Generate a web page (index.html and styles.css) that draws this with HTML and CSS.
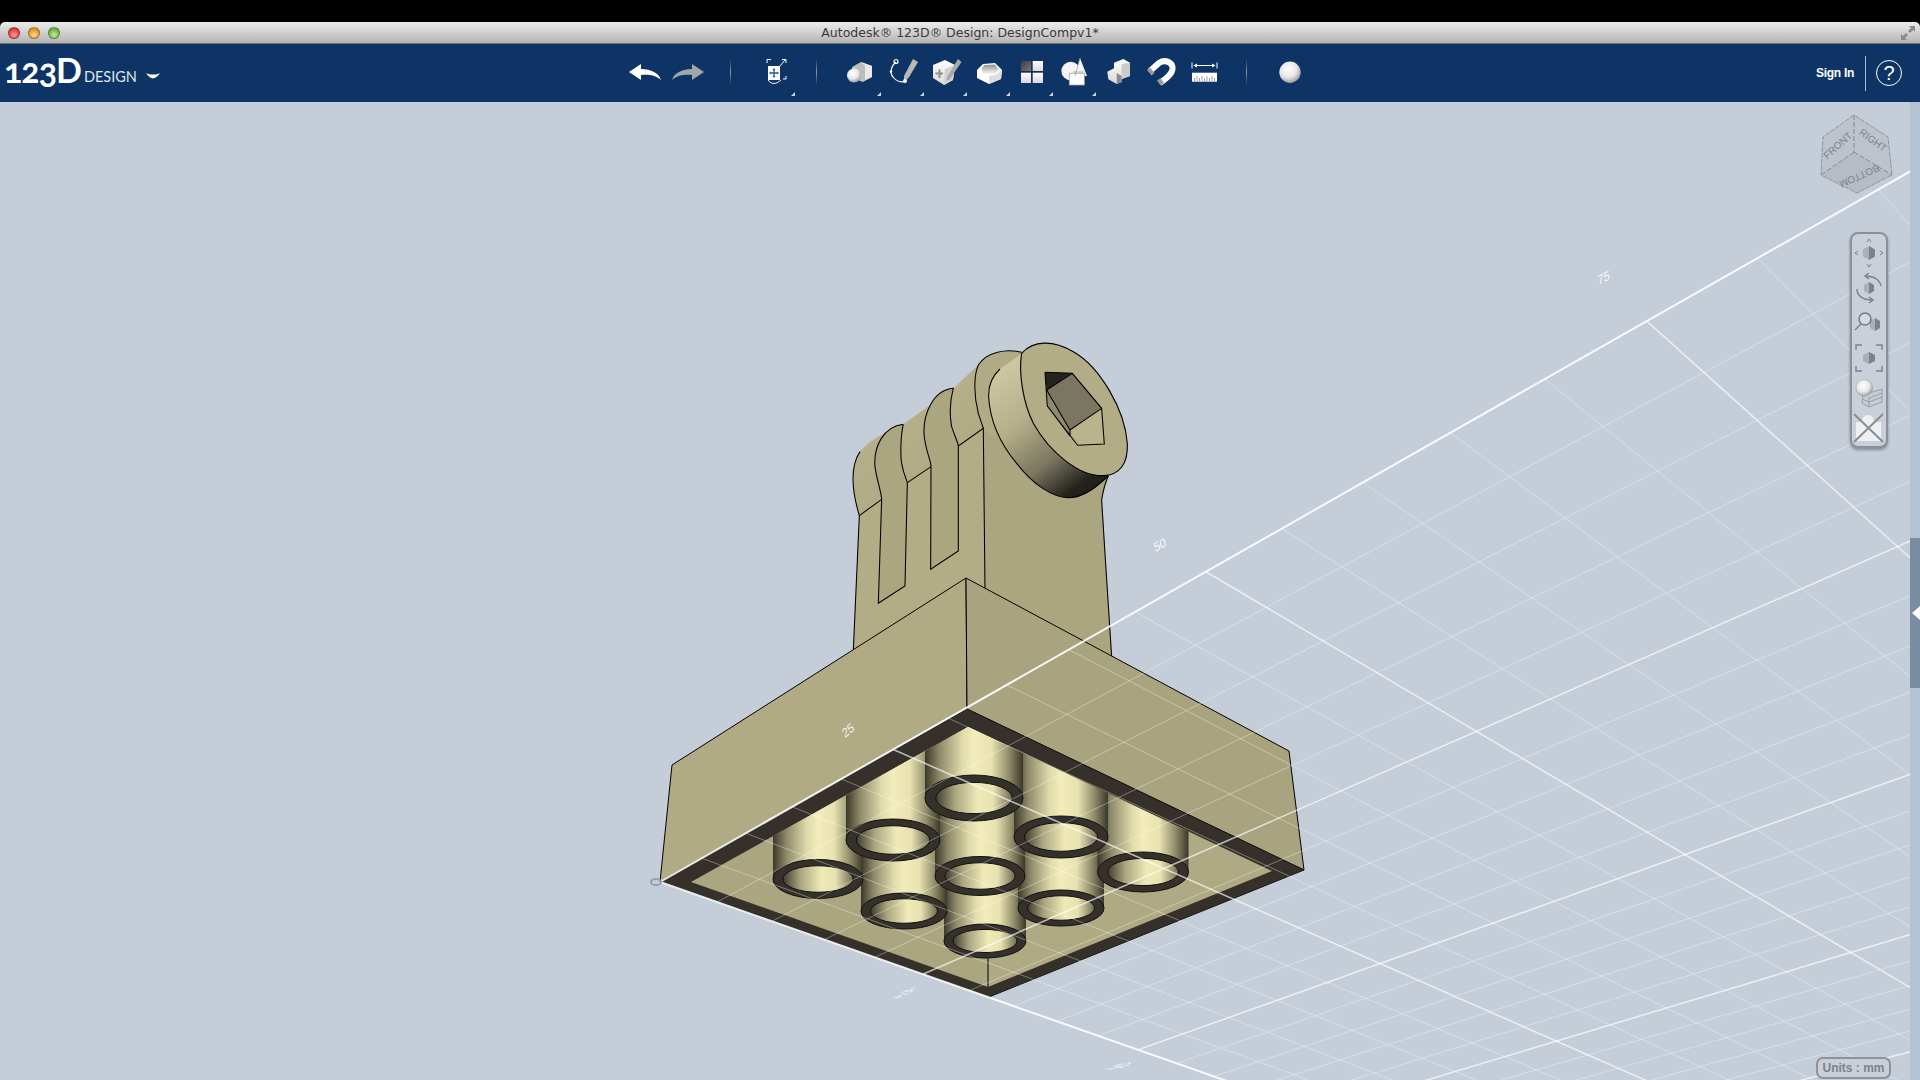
FILE: index.html
```html
<!DOCTYPE html>
<html lang="en">
<head>
  <meta charset="UTF-8">
  <title>Autodesk 123D Design</title>
  <link rel="stylesheet" href="styles.css">
</head>
<body>
  <!-- shared gradients for the toolbar icons and the model -->
  <svg class="defs" width="0" height="0">
    <defs>
      <linearGradient id="gWhite" x1="0" y1="0" x2="0" y2="1">
        <stop offset="0" stop-color="#ffffff"/><stop offset="1" stop-color="#d8d8d8"/>
      </linearGradient>
      <linearGradient id="gBowl" x1="0" y1="0" x2="0" y2="1">
        <stop offset="0" stop-color="#8f8f8f"/><stop offset="1" stop-color="#ffffff"/>
      </linearGradient>
      <linearGradient id="gDark" x1="0" y1="0" x2="1" y2="1">
        <stop offset="0" stop-color="#3e3e3e"/><stop offset="1" stop-color="#777777"/>
      </linearGradient>
      <radialGradient id="gBall" cx="0.42" cy="0.35" r="0.7">
        <stop offset="0" stop-color="#ffffff"/><stop offset="0.55" stop-color="#e8e8e8"/><stop offset="1" stop-color="#8f8f8f"/>
      </radialGradient>
      <linearGradient id="tube" x1="0" y1="0" x2="1" y2="0">
        <stop offset="0" stop-color="#3a3829"/><stop offset="0.15" stop-color="#8f8b6a"/>
        <stop offset="0.38" stop-color="#e0dbab"/><stop offset="0.5" stop-color="#f3edbb"/>
        <stop offset="0.68" stop-color="#e8e2b0"/><stop offset="0.86" stop-color="#8d8a68"/>
        <stop offset="1" stop-color="#3a3829"/>
      </linearGradient>
      <linearGradient id="tubeIn" x1="0" y1="0" x2="1" y2="0">
        <stop offset="0" stop-color="#3e3c2e"/><stop offset="0.25" stop-color="#aaa67f"/>
        <stop offset="0.55" stop-color="#f0eab8"/><stop offset="0.75" stop-color="#e8e2b0"/>
        <stop offset="1" stop-color="#6d6a52"/>
      </linearGradient>
      <linearGradient id="lug" x1="0" y1="0" x2="0.5" y2="1">
        <stop offset="0" stop-color="#c8c4a0"/><stop offset="0.35" stop-color="#b4af89"/><stop offset="1" stop-color="#b0ab85"/>
      </linearGradient>
      <linearGradient id="barrel" gradientUnits="userSpaceOnUse" x1="520" y1="170" x2="790" y2="530">
        <stop offset="0" stop-color="#cbc7a3"/><stop offset="0.35" stop-color="#b5b08a"/>
        <stop offset="0.68" stop-color="#7a7660"/><stop offset="0.92" stop-color="#24231c"/>
        <stop offset="1" stop-color="#1f1e18"/>
      </linearGradient>
      <clipPath id="pocket"><polygon points="691,882 968,727 1272,871 988,987"/></clipPath>
    </defs>
  </svg>

  <div class="app">
    <div class="top-edge"></div>

    <div class="titlebar">
      <div class="lights">
        <span class="light red"></span>
        <span class="light amber"></span>
        <span class="light green"></span>
      </div>
      <div class="title">Autodesk® 123D® Design: DesignCompv1*</div>
      <svg class="fullscreen" width="16" height="16" viewBox="0 0 16 16">
        <path d="M1 15 L1 9 L3 11 L6 8 L8 10 L5 13 L7 15 Z M15 1 L15 7 L13 5 L10 8 L8 6 L11 3 L9 1 Z"/>
      </svg>
    </div>

    <div class="toolbar">
      <div class="logo">
        <span class="logo-mark">123D</span>
        <span class="logo-name">DESIGN</span>
        <svg class="logo-menu" width="14" height="6" viewBox="0 0 14 6"><path d="M0 0 C4 2 10 2 14 0 C12 3 9 5.500 7 5.500 C5 5.500 2 3 0 0 Z"/></svg>
      </div>

      <div class="tools">
        <div class="tool">
          <svg viewBox="0 0 40 40"><path fill="#fff" d="M4 20 L16 12 L16 17 C26 17 34 21 36 28 C30 23 24 22.5 16 23 L16 28 Z"/></svg>
        </div>
        <div class="tool">
          <svg viewBox="0 0 40 40"><path fill="#a3a6a9" d="M36 20 L24 12 L24 17 C14 17 6 21 4 28 C10 23 16 22.5 24 23 L24 28 Z"/></svg>
        </div>
        <div class="tool"><span class="sep"></span></div>
        <div class="tool has-menu">
          <svg viewBox="0 0 40 40">
            <path class="ln" d="M13 11 V7.500 H17 M28 7.500 H32 V11 M32 24 V27 H29 M14 28 C15 30 18 31.500 20 31.500 C22 31.500 25 30 27 28 M26 14 L31 8"/>
            <rect x="14" y="14" width="12" height="14" fill="#fff"/>
            <path d="M20 16 L21.500 18 H20.700 V20.300 H23 V19.500 L25 21 L23 22.500 V21.700 H20.700 V24 H21.500 L20 26 L18.500 24 H19.300 V21.700 H17 V22.500 L15 21 L17 19.500 V20.300 H19.300 V18 H18.500 Z" fill="#2a5a94"/>
          </svg>
        </div>
        <div class="tool"><span class="sep"></span></div>
        <div class="tool has-menu">
          <svg viewBox="0 0 40 40">
            <polygon points="12,15 21,10 32,14 32,25 23,30 12,26" fill="#bdbdbd"/>
            <polygon points="21,10 32,14 32,25 25,28 25,14" fill="#e9e9e9"/>
            <circle cx="14" cy="23.500" r="7" fill="url(#gBall)"/>
          </svg>
        </div>
        <div class="tool has-menu">
          <svg viewBox="0 0 40 40">
            <path d="M13 10 C8 14 6.500 21 10 25 C13 29 18 30.500 22 29.500" fill="none" stroke="#fff" stroke-width="1.200"/>
            <circle cx="13" cy="9.500" r="2" fill="none" stroke="#fff" stroke-width="1.200"/>
            <circle cx="8" cy="19.500" r="1.200" fill="#fff"/>
            <polygon points="30,7 35,10 25.500,26 21,29.500 21,24" fill="#b9b9b9"/>
            <circle cx="22" cy="29" r="2" fill="#fff"/>
          </svg>
        </div>
        <div class="tool has-menu">
          <svg viewBox="0 0 40 40">
            <polygon points="7,13 19,8 29,13 27,28 18,33 7,26" fill="url(#gWhite)"/>
            <polygon points="19,17 29,13 27,28 18,33" fill="#d2d2d2"/>
            <path d="M13.500 17.500 V26 M9.500 21.500 H17" stroke="#8f8f8f" stroke-width="2" fill="none"/>
            <polygon points="32,7 35.500,10 24,27 20.500,29 21,25" fill="#a9a9a9"/>
          </svg>
        </div>
        <div class="tool has-menu">
          <svg viewBox="0 0 40 40">
            <polygon points="8,18 14,12 26,11 33,18 32,27 20,32 8,26" fill="#ffffff"/>
            <polygon points="20,32 32,27 33,18 27,22.500 20,24" fill="#dedede"/>
            <polygon points="12.500,17 15,13 26,12.500 29.500,17 26,22.500 14,22.500" fill="url(#gBowl)"/>
          </svg>
        </div>
        <div class="tool has-menu">
          <svg viewBox="0 0 40 40">
            <rect x="9" y="9" width="10" height="10" fill="url(#gDark)"/>
            <rect x="20.700" y="9" width="10.300" height="10" fill="url(#gWhite)"/>
            <rect x="9" y="20.700" width="10" height="10.300" fill="url(#gWhite)"/>
            <rect x="20.700" y="20.700" width="10.300" height="10.300" fill="url(#gWhite)"/>
          </svg>
        </div>
        <div class="tool has-menu">
          <svg viewBox="0 0 40 40">
            <circle cx="15.700" cy="19" r="9.300" fill="#f4f4f4"/>
            <polygon points="25,6 32,24 20,24" fill="#f4f4f4"/>
            <rect x="14.300" y="21.300" width="15" height="11.700" fill="#fff" stroke="#a8a8a8" stroke-width="0.800"/>
            <path d="M25 6 L20 24 M18 20 H29" stroke="#9a9a9a" stroke-width="0.700" fill="none"/>
          </svg>
        </div>
        <div class="tool">
          <svg viewBox="0 0 40 40">
            <polygon points="9.300,19.700 16,16.300 16,10.700 25.300,7 32,10.700 32,24 23.700,27 23.700,30 18.700,32 10.300,27.300" fill="url(#gWhite)"/>
            <polygon points="18.700,21 23.700,24 23.700,30 18.700,32" fill="#8a8a8a"/>
            <polygon points="23.700,12 32,10.700 32,24 23.700,27" fill="#cbcbcb"/>
          </svg>
        </div>
        <div class="tool">
          <svg viewBox="0 0 40 40">
            <path d="M9 19 L18 11 C24 7 32 10 31.500 17 C31 22 26 26 19 31" fill="none" stroke="#fff" stroke-width="6"/>
            <path d="M6 18 L10.500 23.500 L13.500 21 L9 15.500 Z M16 28.500 L19.500 33.500 L23 31 L19.500 26 Z" fill="#9a9a9a"/>
          </svg>
        </div>
        <div class="tool">
          <svg viewBox="0 0 40 40">
            <path d="M8 10.500 V16.500 M33 10.500 V16.500 M11 13.500 H30" stroke="#fff" stroke-width="1" fill="none"/>
            <path d="M9.500 13.500 L13 11.500 V15.500 Z M31.500 13.500 L28 11.500 V15.500 Z" fill="#fff"/>
            <rect x="8" y="20.700" width="25" height="9" fill="#fff"/>
            <path d="M10.500 29 V26 M13 29 V24 M15.500 29 V26 M18 29 V24 M20.500 29 V26 M23 29 V24 M25.500 29 V26 M28 29 V24 M30.500 29 V26" stroke="#777" stroke-width="0.700" fill="none"/>
          </svg>
        </div>
        <div class="tool"><span class="sep"></span></div>
        <div class="tool">
          <svg viewBox="0 0 40 40"><circle cx="20" cy="20.300" r="10.700" fill="url(#gBall)"/></svg>
        </div>
      </div>

      <div class="account">
        <span class="sign-in">Sign In</span>
        <span class="account-sep"></span>
        <span class="help">?</span>
      </div>
    </div>

    <div class="workspace">
      <div class="canvas">
        <svg class="scene" width="1910" height="978" viewBox="0 102 1910 978">
          <!-- tower with the ribs and the bolt head, drawn in 3x crop units -->
          <g transform="translate(820 320) scale(0.3333)">
            <path class="face-r" d="M490,325 L495,805 L875,1010 L845,535 L865,468 L600,95 L475,135 Z"/>
            <path class="face-l" d="M118,587 L100,990 L438,775 L495,805 L490,325 Z"/>
            <path class="collar" d="M605,97 C560,85 500,95 475,135 C460,170 462,230 475,280 L490,325 L530,360 L505,200 L540,147 Z"/>
            <path fill="url(#lug)" d="M118,587 C95,510 90,440 120,395 C140,370 165,355 185,345 L250,313 C190,320 160,380 165,440 C170,480 183,510 185,538 Z"/>
            <path class="face-r" d="M250,313 C190,320 160,380 165,440 C170,480 183,510 185,538 L175,850 L255,798 L262,488 C260,480 250,460 245,430 C240,400 243,340 250,313 Z"/>
            <path fill="url(#lug)" d="M250,313 C243,340 240,400 245,430 C250,460 260,480 262,488 L333,440 C333,420 315,390 312,340 C310,280 340,210 400,205 Z"/>
            <path class="face-r" d="M400,205 C340,210 310,280 312,340 C315,390 333,420 333,440 L332,748 L415,693 L415,378 C415,370 405,350 395,320 C388,280 390,240 400,205 Z"/>
            <path fill="url(#lug)" d="M400,205 C390,240 388,280 395,320 C405,350 415,370 415,378 L490,325 L475,280 C462,230 460,170 475,135 Z"/>
            <path fill="url(#barrel)" d="M605,100 L540,147 C515,170 505,200 506,230 C510,300 540,370 590,430 C640,495 700,533 745,533 C790,535 830,500 865,468 L760,268 Z"/>
            <path class="ln-k" d="M540,147 C515,170 505,200 506,230 C510,300 540,370 590,430 C640,495 700,533 745,533 C790,535 830,500 865,468"/>
            <path class="bolt" d="M605,100 C640,60 700,60 760,95 C840,140 915,270 922,370 C925,430 900,465 850,467 C780,470 690,400 640,310 C610,250 595,160 605,100 Z"/>
            <polygon points="675,157 757,160 680,210" fill="#24231c"/>
            <polygon points="680,210 757,160 845,265 750,330" fill="#7a7660"/>
            <polygon points="750,330 845,265 853,372 773,376" fill="#b9b48e"/>
            <polygon points="680,210 750,330 750,348 682,258" fill="#8f8b70"/>
            <path class="ln-k" d="M675,157 L757,160 L845,265 L853,372 L773,376 L682,258 L675,157 M680,210 L757,160 M680,210 L750,330 L845,265 M750,330 V348 M682,258 L750,348"/>
            <path class="ln-k" d="M118,587 C95,510 90,440 120,395 M250,313 C190,320 160,380 165,440 C170,480 183,510 185,538 L175,850 L255,798 L262,488 C260,480 250,460 245,430 C240,400 243,340 250,313"/>
            <path class="ln-k" d="M118,587 L100,990 M118,587 L185,538 M262,488 L333,440 L332,748 L415,693 L415,378 L490,325 L495,805 M333,440 C333,420 315,390 312,340 C310,280 340,210 400,205 C390,240 388,280 395,320 C405,350 415,370 415,378"/>
            <path class="ln-k" d="M605,97 C560,85 500,95 475,135 C460,170 462,230 475,280 L490,325 M865,468 C855,490 848,520 845,540 L855,700 L875,1010"/>
          </g>

          <!-- base block -->
          <polygon class="block-l" points="672,765 966,578 967,709 660,882"/>
          <polygon class="block-r" points="966,578 1289,751 1304,870 967,709"/>
          <polygon class="rim" points="660,882 967,709 1304,870 989,997"/>
          <polygon class="floor-l" points="691,882 968,727 988,736.500 988,987"/>
          <polygon class="floor-r" points="988,736.500 1272,871 988,987"/>
          <path class="ln-b" d="M988 955 V987"/>
          <g id="tubes"></g>

          <!-- grid lies in front of the model -->
          <g id="grid"></g>
          <ellipse class="origin" cx="656" cy="882" rx="5" ry="3"/>
          <text class="tick" transform="translate(850 734) rotate(-40) skewX(-12)" text-anchor="middle">25</text>
          <text class="tick" transform="translate(1161 549) rotate(-30) skewX(-15)" text-anchor="middle">50</text>
          <text class="tick" transform="translate(1604 282) rotate(-25) skewX(-20)" text-anchor="middle">75</text>
          <text class="tick" transform="translate(900 997) rotate(-20) scale(1.300 0.500) skewX(-40)" text-anchor="middle">-25</text>
          <text class="tick" transform="translate(1114 1069) rotate(-10) scale(1.300 0.450) skewX(-40)" text-anchor="middle">-50</text>
        </svg>

        <svg class="view-cube" width="80" height="90" viewBox="0 0 80 90">
          <polygon class="cube-face" points="39,5 8,27 6,65 39,42"/>
          <polygon class="cube-face" points="39,5 73,27 77,65 39,42"/>
          <polygon class="cube-face low" points="39,42 6,65 42,83 77,65"/>
          <path class="cube-edge" d="M39,5 L8,27 L6,65 L42,83 L77,65 L73,27 Z"/>
          <path class="cube-spoke" d="M39,5 V42 M39,42 L6,65 M39,42 L77,65"/>
          <text class="cube-text" transform="translate(25 38) rotate(-42)" text-anchor="middle">FRONT</text>
          <text class="cube-text" transform="translate(56 33) rotate(36)" text-anchor="middle">RIGHT</text>
          <text class="cube-text" transform="translate(43 63) rotate(156)" text-anchor="middle">BOTTOM</text>
        </svg>

        <div class="nav-bar">
          <svg viewBox="0 0 34 34">
            <polygon class="hex-l" points="17,10 11,13.500 11,20.500 17,24"/>
            <polygon class="hex-r" points="17,10 23,13.500 23,20.500 17,24"/>
            <path class="nav-ln thin" d="M15 6 L17 3 L19 6 M15 28 L17 31 L19 28 M6 15 L3 17 L6 19 M28 15 L31 17 L28 19"/>
          </svg>
          <svg viewBox="0 0 34 34">
            <polygon class="hex-l" points="17,11 12,14 12,20 17,23"/>
            <polygon class="hex-r" points="17,11 22,14 22,20 17,23"/>
            <path class="nav-ln" d="M29 15 C28 9 22 5 14 5 M17 2 L13 5 L17 8 M5 18 C5 25 11 29 20 29 M17 26 L21 29 L17 32"/>
          </svg>
          <svg viewBox="0 0 34 34">
            <polygon class="hex-l" points="23,12 18,15 18,22 23,25"/>
            <polygon class="hex-r" points="23,12 28,15 28,22 23,25"/>
            <circle class="lens" cx="13" cy="13" r="6"/>
            <path class="nav-ln" d="M9 18 L3 24"/>
          </svg>
          <svg viewBox="0 0 34 34">
            <polygon class="hex-l" points="17,11 11,14 11,20 17,23"/>
            <polygon class="hex-r" points="17,11 23,14 23,20 17,23"/>
            <path class="nav-ln" d="M4 9 V4 H10 M24 4 H30 V9 M30 25 V30 H24 M10 30 H4 V25"/>
          </svg>
          <svg viewBox="0 0 34 34">
            <polygon class="box-side" points="11,19 30,13 30,26 17,31 10,27"/>
            <path class="box-ln" d="M11 19 L30 13 V26 L17 31 L10 27 Z M17 22 V31 M17 22 L30 17 M10 23 L17 26 L30 21"/>
            <circle class="ball" cx="12.300" cy="12" r="8.300"/>
          </svg>
          <svg viewBox="0 0 34 34">
            <circle cx="16" cy="10" r="6" fill="#eef0f2"/>
            <polygon points="4,11 29,11 29,30 4,30" fill="#eef0f2"/>
            <path class="nav-x" d="M2 3 L31 31 M31 3 L2 31"/>
          </svg>
        </div>

        <div class="units">Units : mm</div>
      </div>

      <div class="side-strip">
        <div class="side-handle"></div>
      </div>
    </div>
  </div>

  <script src="scene.js"></script>
</body>
</html>
```

FILE: styles.css
```css
* {
  margin: 0;
  padding: 0;
  box-sizing: border-box;
}

body {
  width: 1920px;
  height: 1080px;
  overflow: hidden;
  background: #000;
  font-family: 'Liberation Sans', sans-serif;
}

.defs {
  position: absolute;
}

.app {
  display: flex;
  flex-direction: column;
  height: 1080px;
}

.top-edge {
  height: 22px;
  background: #000;
}

/* Mac title bar */
.titlebar {
  height: 22px;
  display: flex;
  align-items: center;
  padding: 0 4px 0 8px;
  border-radius: 5px 5px 0 0;
  border-bottom: 1px solid #6e6e6e;
  background: linear-gradient(#ececec, #b4b4b4);
}

.lights {
  display: flex;
  gap: 8px;
  width: 60px;
}

.light {
  width: 12px;
  height: 12px;
  border-radius: 50%;
  border: 1px solid rgba(0, 0, 0, 0.3);
}

.light.red { background: radial-gradient(circle at 50% 70%, #ff9a95, #d93a3a 70%); }
.light.amber { background: radial-gradient(circle at 50% 70%, #ffd98a, #d9932a 70%); }
.light.green { background: radial-gradient(circle at 50% 70%, #c5ee9a, #6cab42 70%); }

.title {
  flex: 1;
  text-align: center;
  font-family: 'DejaVu Sans', sans-serif;
  font-size: 12.500px;
  color: #3a3a3a;
}

.fullscreen {
  fill: #8a8a8a;
  margin-left: 48px;
}

/* Main toolbar */
.toolbar {
  height: 58px;
  display: flex;
  background: #0d3464;
  color: #fff;
}

.logo {
  width: 623px;
  display: flex;
  align-items: flex-start;
  padding: 3px 0 0 4px;
  flex-shrink: 0;
}

.logo-mark {
  font-family: Lato, sans-serif;
  font-weight: 700;
  font-size: 34px;
  font-variant-numeric: oldstyle-nums;
  letter-spacing: -1px;
  line-height: 46px;
}

.logo-name {
  font-family: Lato, sans-serif;
  font-size: 14.500px;
  line-height: 16px;
  margin: 22px 0 0 3px;
  color: #dfe6ee;
}

.logo-menu {
  fill: #fff;
  margin: 26px 0 0 9px;
}

.tools {
  display: flex;
}

.tool {
  position: relative;
  width: 43px;
  height: 58px;
  padding: 8px 1.500px 0;
  display: flex;
  justify-content: center;
}

.tool svg {
  width: 40px;
  height: 40px;
}

.tool.has-menu::after {
  content: "";
  position: absolute;
  right: 0;
  bottom: 6px;
  border-style: solid;
  border-width: 0 0 4px 4px;
  border-color: transparent transparent #cfd5dc transparent;
}

.sep {
  width: 1px;
  height: 26px;
  margin-top: 7px;
  background: linear-gradient(rgba(190, 190, 170, 0), rgba(190, 190, 170, 0.75) 50%, rgba(190, 190, 170, 0));
}

.ln {
  fill: none;
  stroke: #fff;
  stroke-width: 1;
}

.account {
  margin-left: auto;
  display: flex;
  align-items: center;
  padding-right: 18px;
}

.sign-in {
  font-size: 12px;
  font-weight: 700;
  letter-spacing: -0.300px;
}

.account-sep {
  width: 1px;
  height: 35px;
  margin: 0 10px 0 11px;
  background: #a9bdd6;
}

.help {
  width: 26px;
  height: 26px;
  border: 1px solid #fff;
  border-radius: 50%;
  text-align: center;
  font-size: 20px;
  line-height: 24px;
}

/* 3D view */
.workspace {
  flex: 1;
  display: flex;
  min-height: 0;
}

.canvas {
  position: relative;
  flex: 1;
  overflow: hidden;
  background: #c4cdd8;
}

.scene {
  display: block;
}

.side-strip {
  width: 10px;
  background: #b4c2d3;
  padding-top: 436px;
}

.side-handle {
  position: relative;
  height: 150px;
  background: #7a8ca2;
}

.side-handle::after {
  content: "";
  position: absolute;
  left: 2px;
  top: 68px;
  width: 8px;
  height: 14px;
  background: #fff;
  clip-path: polygon(100% 0, 0 50%, 100% 100%);
}

/* model */
.face-r { fill: #aaa680; }
.face-l { fill: #b2ad87; }
.collar { fill: #b0ab85; }
.bolt { fill: #b2ad87; stroke: #000; stroke-width: 3.400; }
.ln-k { fill: none; stroke: #000; stroke-width: 3.200; }
.ln-b { fill: none; stroke: #000; stroke-width: 1; }
.block-l { fill: #b0ab85; stroke: #000; stroke-width: 1; }
.block-r { fill: #a8a47f; stroke: #000; stroke-width: 1; }
.rim { fill: #35312a; stroke: #1a1812; stroke-width: 1; }
.floor-l { fill: #aaa680; }
.floor-r { fill: #aeaa83; }
.tube-body { fill: url(#tube); }
.tube-ring { fill: #35312a; stroke: #111; stroke-width: 1; }
.tube-hole { fill: url(#tubeIn); stroke: #111; stroke-width: 1; }

.grid-minor { stroke: #fff; stroke-opacity: 0.35; stroke-width: 1; }
.grid-major { stroke: #fff; stroke-opacity: 0.65; stroke-width: 1.600; }
.grid-axis { stroke: #fff; stroke-opacity: 0.9; stroke-width: 2; }
.origin { fill: none; stroke: #999ea5; stroke-width: 2; }
.tick { font-family: 'Liberation Sans', sans-serif; font-size: 12px; fill: #fff; fill-opacity: 0.9; }

/* view cube */
.view-cube {
  position: absolute;
  top: 8px;
  right: 15px;
}

.cube-face { fill: #b8bdc4; fill-opacity: 0.65; }
.cube-face.low { fill: #adb2b8; }
.cube-edge { fill: none; stroke: #92969d; stroke-width: 1; stroke-dasharray: 5 1; }
.cube-spoke { fill: none; stroke: #868a91; stroke-width: 1; stroke-dasharray: 5 2; }
.cube-text { font-family: 'Liberation Sans', sans-serif; font-size: 10px; fill: #7f838a; }

/* navigation bar */
.nav-bar {
  position: absolute;
  top: 130px;
  right: 22px;
  width: 38px;
  height: 216px;
  display: flex;
  flex-direction: column;
  gap: 1px;
  padding: 2px 0 1px;
  border: 2px solid #8c9198;
  border-radius: 8px;
  background: #c9d0d9;
  box-shadow: 0 2px 3px rgba(60, 60, 60, 0.45);
}

.nav-bar svg {
  width: 34px;
  height: 34px;
}

.hex-l { fill: #aab0b6; }
.hex-r { fill: #7e8288; }
.nav-ln { fill: none; stroke: #7f8389; stroke-width: 1.500; }
.nav-ln.thin { stroke-width: 1; }
.nav-x { fill: none; stroke: #8a8e94; stroke-width: 2; }
.lens { fill: #d5dae0; stroke: #777b81; stroke-width: 1.500; }
.box-side { fill: #c8cdd3; }
.box-ln { fill: none; stroke: #9a9ea4; stroke-width: 1; }
.ball { fill: url(#gBall); stroke: #9a9ea4; stroke-width: 0.500; }

.units {
  position: absolute;
  right: 19px;
  bottom: 1px;
  width: 75px;
  height: 22px;
  border: 2px solid #8e9299;
  border-radius: 7px;
  background: #c8cfd8;
  text-align: center;
  font-size: 12px;
  font-weight: 700;
  line-height: 18px;
  color: #7d8288;
}
```

FILE: scene.js
```js
// builds the perspective grid and the nine tubes in the pocket
var NS = 'http://www.w3.org/2000/svg';

function add(parent, name, attrs) {
  var el = document.createElementNS(NS, name);
  for (var k in attrs) el.setAttribute(k, attrs[k]);
  parent.appendChild(el);
  return el;
}

var O = [660, 882];
var vpA = [-943, 1793];
var vpB = [3300, 1808];

// position on the two axes, one unit = 25mm
function axisA(t) {
  var x = (660 + 119.8 * t) / (1 - 0.127 * t);
  return [x, 882 - 0.5684 * (x - 660)];
}
function axisB(s) {
  var x = (660 + 365 * s) / (1 + 0.1106 * s);
  return [x, 882 + 0.351 * (x - 660)];
}

function ray(from, vp, dist, sign) {
  var dx = vp[0] - from[0], dy = vp[1] - from[1];
  var len = Math.sqrt(dx * dx + dy * dy);
  return [from[0] + sign * dx / len * dist, from[1] + sign * dy / len * dist];
}

var grid = document.getElementById('grid');

function gridLine(a, b, cls) {
  add(grid, 'line', { x1: a[0], y1: a[1], x2: b[0], y2: b[1], 'class': cls });
}

for (var i = 1; i <= 20; i++) {
  var major = i % 5 === 0;
  var cls = major ? 'grid-major' : 'grid-minor';
  var a = axisA(i / 5);
  gridLine(a, ray(a, vpB, 2500, 1), cls);
  var b = axisB(i / 5);
  gridLine(b, ray(b, vpA, 2500, -1), cls);
}
gridLine(O, axisA(4), 'grid-axis');
gridLine(O, axisB(4), 'grid-axis');

var tubes = [
  [985, 941, 41, 17],
  [904, 911, 43, 18],
  [1061, 908, 43, 18],
  [818, 879, 45, 19.5],
  [980, 876, 45, 19.5],
  [1143, 872, 45.5, 20],
  [893, 840, 47, 21],
  [1061, 837, 47, 21],
  [974, 798, 49, 23]
];

var layer = document.getElementById('tubes');
tubes.forEach(function (c) {
  var cx = c[0], cy = c[1], rx = c[2], ry = c[3];
  var clip = add(layer, 'g', { 'clip-path': 'url(#pocket)' });
  add(clip, 'path', {
    'class': 'tube-body',
    d: 'M' + (cx - rx) + ',700 L' + (cx - rx) + ',' + cy +
       ' A' + rx + ' ' + ry + ' 0 0 0 ' + (cx + rx) + ',' + cy +
       ' L' + (cx + rx) + ',700 Z'
  });
  add(layer, 'ellipse', { 'class': 'tube-ring', cx: cx, cy: cy, rx: rx, ry: ry });
  add(layer, 'ellipse', { 'class': 'tube-hole', cx: cx, cy: cy, rx: rx * 0.78, ry: ry * 0.68 });
});
```
